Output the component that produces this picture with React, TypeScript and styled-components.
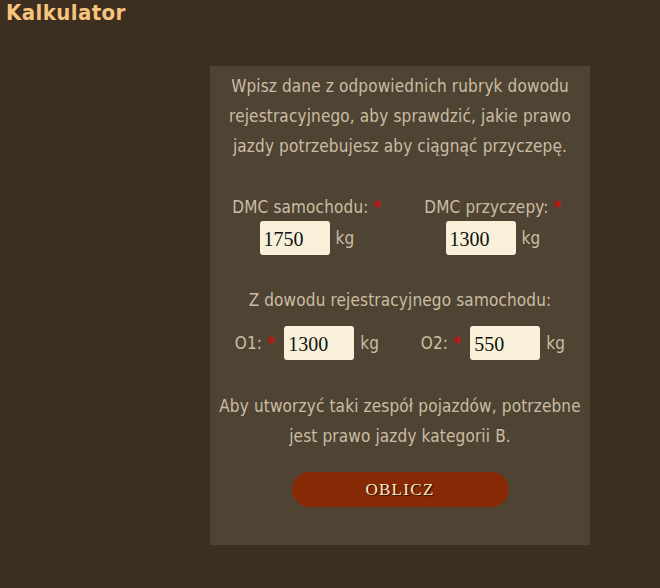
import styled, { createGlobalStyle } from 'styled-components';

const GlobalStyle = createGlobalStyle`
  html, body {
    margin: 0;
    padding: 0;
    background: #3c2f1f;
  }
  body {
    font-family: "DejaVu Sans Condensed", "DejaVu Sans", sans-serif;
    width: 660px;
    height: 588px;
    overflow: hidden;
  }
`;

const Page = styled.div`
  width: 660px;
  height: 588px;
  background: #3c2f1f;
`;

const Title = styled.h1`
  margin: 0;
  padding: 0 0 0 6px;
  font-size: 22px;
  font-weight: 700;
  letter-spacing: 0.4px;
  line-height: 26px;
  color: #f8c37c;
`;

const Panel = styled.section`
  width: 380px;
  height: 479px;
  margin: 40px 0 0 210px;
  box-sizing: border-box;
  padding: 5px 0 0;
  background: #4f4434;
  display: flex;
  flex-direction: column;
  align-items: center;
  color: #cbbda3;
  font-size: 17px;
  letter-spacing: 0.15px;
  line-height: 30px;
  text-align: center;
`;

const Intro = styled.p`
  margin: 0;
  width: 350px;
`;

const FieldRow = styled.div<{ $top: number }>`
  width: 100%;
  box-sizing: border-box;
  padding: 0 4px;
  display: grid;
  grid-template-columns: 1fr 1fr;
  margin-top: ${(p) => p.$top}px;
`;

const Field = styled.div`
  display: flex;
  flex-direction: column;
  align-items: center;
`;

const Label = styled.span`
  line-height: 26px;
  margin-bottom: 1px;
`;

const Star = styled.span`
  color: #c8110c;
  font-weight: 700;
  margin-left: 5px;
`;

const InlineLabel = styled.span`
  margin-right: 3px;
`;

const InputLine = styled.div`
  display: flex;
  align-items: center;
  gap: 6px;
`;

const Input = styled.input`
  width: 70px;
  height: 34px;
  box-sizing: border-box;
  border: none;
  border-radius: 3px;
  background: #f8f0d9;
  padding: 3px 0 0 4px;
  font-family: "Liberation Serif", serif;
  font-size: 20px;
  color: #111;
  outline: none;
`;

const SubHeading = styled.p`
  margin: 30px 0 0;
  line-height: 30px;
`;

const Result = styled.p`
  margin: 31px 0 0;
  width: 366px;
`;

const Button = styled.button`
  margin-top: 21px;
  width: 217px;
  height: 35px;
  border: none;
  border-radius: 18px;
  background: #862904;
  color: #f8e8cc;
  font-family: "Liberation Serif", serif;
  font-size: 17px;
  letter-spacing: 1.3px;
  text-shadow: 1px 1px 1px #2a1000;
  cursor: pointer;
`;

function App() {
  return (
    <Page>
      <GlobalStyle />
      <Title>Kalkulator</Title>
      <Panel>
        <Intro>
          Wpisz dane z odpowiednich rubryk dowodu rejestracyjnego, aby sprawdzić, jakie prawo
          jazdy potrzebujesz aby ciągnąć przyczepę.
        </Intro>
        <FieldRow $top={33}>
          <Field>
            <Label>
              DMC samochodu:<Star>*</Star>
            </Label>
            <InputLine>
              <Input defaultValue="1750" />
              <span>kg</span>
            </InputLine>
          </Field>
          <Field>
            <Label>
              DMC przyczepy:<Star>*</Star>
            </Label>
            <InputLine>
              <Input defaultValue="1300" />
              <span>kg</span>
            </InputLine>
          </Field>
        </FieldRow>
        <SubHeading>Z dowodu rejestracyjnego samochodu:</SubHeading>
        <FieldRow $top={11}>
          <Field>
            <InputLine>
              <InlineLabel>
                O1:<Star>*</Star>
              </InlineLabel>
              <Input defaultValue="1300" />
              <span>kg</span>
            </InputLine>
          </Field>
          <Field>
            <InputLine>
              <InlineLabel>
                O2:<Star>*</Star>
              </InlineLabel>
              <Input defaultValue="550" />
              <span>kg</span>
            </InputLine>
          </Field>
        </FieldRow>
        <Result>
          Aby utworzyć taki zespół pojazdów, potrzebne jest prawo jazdy kategorii B.
        </Result>
        <Button>OBLICZ</Button>
      </Panel>
    </Page>
  );
}

export default App;
